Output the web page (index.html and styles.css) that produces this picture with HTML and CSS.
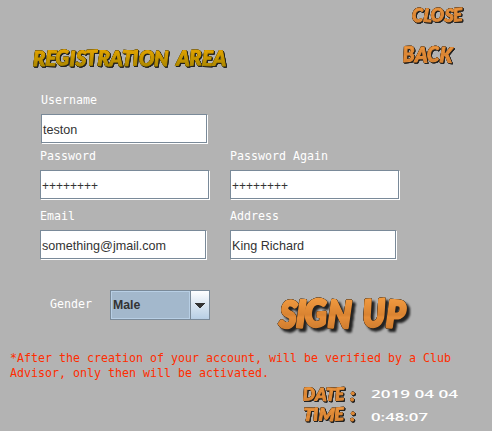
FILE: index.html
```html
<!DOCTYPE html>
<html lang="en">
<head>
<meta charset="utf-8">
<title>Registration Area</title>
<link rel="stylesheet" href="styles.css">
</head>
<body>
<svg class="defs" aria-hidden="true">
  <defs>
    <linearGradient id="gold" x1="0" y1="0" x2="0" y2="1"><stop offset=".2" stop-color="#e5a500"/><stop offset=".85" stop-color="#ad8800"/></linearGradient>
    <linearGradient id="orange" x1="0" y1="0" x2="0" y2="1"><stop offset=".2" stop-color="#f19a40"/><stop offset=".55" stop-color="#d98331"/><stop offset=".6" stop-color="#e58d38"/><stop offset=".9" stop-color="#ca792d"/></linearGradient>
  </defs>
</svg>
<main class="window">
  <header class="header">
    <svg class="art title" width="210" height="30"><text x="8" y="22.5" textLength="193" lengthAdjust="spacingAndGlyphs" rotate="0 2 -3 0 3 -2 2 0 3 -2 2 0 0 2 -2 2 2">REGISTRATION AREA</text></svg>
    <nav class="nav">
      <svg class="art close" width="70" height="25"><text x="7" y="16.5" textLength="51" lengthAdjust="spacingAndGlyphs" rotate="0 4 -3 3 -5">CLOSE</text></svg>
      <svg class="art back" width="70" height="30"><text x="8" y="20" textLength="49" lengthAdjust="spacingAndGlyphs" rotate="-4 2 -3 3">BACK</text></svg>
    </nav>
  </header>
  <form class="form">
    <div class="field username"><label>Username</label><div class="input">teston</div></div>
    <div class="pair">
      <div class="field"><label>Password</label><div class="input wide">++++++++</div></div>
      <div class="field"><label>Password Again</label><div class="input wide">++++++++</div></div>
    </div>
    <div class="pair">
      <div class="field"><label>Email</label><div class="input text">something@jmail.com</div></div>
      <div class="field"><label>Address</label><div class="input text">King Richard</div></div>
    </div>
    <div class="actions">
      <label class="gender">Gender</label>
      <div class="combo"><span class="value">Male</span><span class="arrow"><svg width="10" height="5"><path d="M0 0h10v1H9v1H8v1H7v1H6v1H4V4H3V3H2V2H1V1H0z" fill="#333"/></svg></span></div>
      <svg class="art signup" width="145" height="50"><text x="9" y="37" textLength="126" lengthAdjust="spacingAndGlyphs" rotate="4 2 -3 2 0 -3 2">SIGN UP</text></svg>
    </div>
  </form>
  <p class="note">*After the creation of your account, will be verified by a Club<br>Advisor, only then will be activated.</p>
  <footer class="clock">
    <svg class="art small" width="64" height="20"><text x="6" y="14.5" textLength="52" lengthAdjust="spacingAndGlyphs" rotate="-3 2 2 -3 0 0">DATE :</text></svg>
    <svg class="digits" width="100" height="20"><text x="4" y="12" textLength="87" lengthAdjust="spacingAndGlyphs">2019 04 04</text></svg>
    <svg class="art small" width="64" height="22"><text x="6" y="14.5" textLength="52" lengthAdjust="spacingAndGlyphs" rotate="3 -2 2 -3 0 0">TIME :</text></svg>
    <svg class="digits" width="100" height="22"><text x="4" y="15" textLength="57" lengthAdjust="spacingAndGlyphs">0:48:07</text></svg>
  </footer>
</main>
</body>
</html>
```

FILE: styles.css
```css
* { box-sizing: border-box; }
body { margin: 0; background: #b3b3b3; }
.defs { display: block; width: 0; height: 0; }
.window { width: 492px; height: 431px; overflow: hidden; background: #b3b3b3; }

.header { display: flex; justify-content: space-between; height: 93px; padding: 5px 0 0 25px; }
.title { margin-top: 38px; }
.nav { display: flex; flex-direction: column; width: 97px; }
.close { margin-left: 10px; }
.back { margin-top: 12px; }

.art, .digits { display: block; flex: none; overflow: visible; }
.art text {
  font-family: Lato, sans-serif;
  font-weight: 900;
  font-style: italic;
  fill: url(#orange);
  stroke: #e08c3a;
  stroke-width: 1px;
  stroke-linejoin: round;
  word-spacing: 4px;
  filter: drop-shadow(0 0 .6px #24180c) drop-shadow(0 0 .3px #24180c) drop-shadow(1.5px 1.5px .5px #222);
}
.title text {
  font-size: 21px; fill: url(#gold); stroke: url(#gold); word-spacing: 4px;
  filter: drop-shadow(0 0 .6px #332a08) drop-shadow(0 0 .3px #332a08) drop-shadow(1px 1px .3px #222);
}
.close text { font-size: 18px; }
.back text { font-size: 21px; }
.signup text {
  font-size: 37px; stroke: url(#orange); stroke-width: 3px; word-spacing: 6px;
  filter: drop-shadow(0 0 .7px #111) drop-shadow(0 0 .4px #111) drop-shadow(3px 3px .8px #222);
}
.small text { font-size: 17.5px; word-spacing: 2px; }

.form { display: flex; flex-direction: column; padding-left: 40px; }
label { display: block; height: 21px; font: 11.63px/14px "DejaVu Sans Mono", monospace; color: #fff; white-space: pre; }
.username { padding-left: 1px; margin-bottom: 6px; }
.pair { display: grid; grid-template-columns: 190px 190px; height: 60px; }
.input {
  width: 166px; height: 29px; padding: 2px 0 0 1px;
  border: 1px solid #7a8a99; background: #fff; box-shadow: 1px 1px 0 #fff;
  font: 12px/26px "Liberation Sans", sans-serif; color: #333; white-space: nowrap;
}
.input.wide { width: 169px; }
.input.text, .username .input { font-size: 12.6px; }

.actions { display: flex; align-items: flex-start; height: 57px; margin-top: 21px; }
.gender { width: 70px; padding: 7px 0 0 10px; }
.combo { display: flex; width: 100px; height: 30px; border: 1px solid #7a8a99; }
.value {
  width: 79px; border: 1px solid #b8cfe5; background: #a3b8cc; padding-left: 1px;
  font: bold 12.3px/27px "Liberation Sans", sans-serif; color: #333;
}
.arrow {
  display: flex; flex: 1; align-items: center; justify-content: center; padding-top: 1px;
  border-left: 1px solid #7a8a99; background: linear-gradient(#fff, #dce7f2 45%, #b8cfe5);
}
.signup { margin-left: 60px; }

.note { margin: 4px 0 0 10px; font: 11.63px/15px "DejaVu Sans Mono", monospace; color: #ff2d00; white-space: nowrap; }
.clock { display: grid; grid-template-columns: 70px 100px; width: 170px; margin: 5px 0 0 297px; }
.digits text { font: 11.5px "Open Sans", sans-serif; font-weight: 600; fill: #fff; }
```
